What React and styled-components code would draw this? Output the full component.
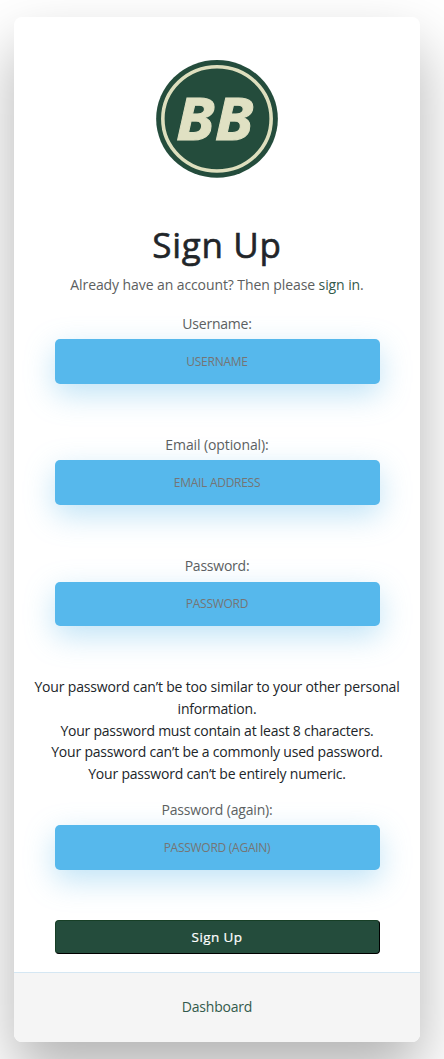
import React from "react";
import styled, { createGlobalStyle } from "styled-components";

const GlobalStyle = createGlobalStyle`
  * { box-sizing: border-box; }
  html, body { margin: 0; background: #fff; }
  body {
    height: 1059px;
    overflow: hidden;
    font-family: "Open Sans", "Noto Sans", sans-serif;
    font-size: 14px;
    line-height: 21.75px;
    color: #212529;
  }
`;

const Page = styled.main`
  padding: 17px 24px 0 14px;
`;

const Card = styled.section`
  display: flex;
  flex-direction: column;
  width: 406px;
  height: 1025px;
  border-radius: 8px;
  background: #fff;
  box-shadow: 0 30px 60px 0 rgba(0, 0, 0, 0.3);
  text-align: center;
  overflow: hidden;
`;

const Logo = styled.svg`
  display: block;
  width: 122px;
  height: 118px;
  margin: 43px auto 0 142px;
`;

const Title = styled.h1`
  margin: 45px 0 0;
  height: 44px;
  font-size: 35px;
  line-height: 44px;
  font-weight: 500;
  letter-spacing: 0.7px;
  -webkit-text-stroke: 0.6px currentColor;
`;

const Intro = styled.p`
  margin: 7px 0 0;
  height: 22px;
  color: #5c5e60;
  letter-spacing: -0.09px;
`;

const Link = styled.a`
  color: #335a4b;
  text-decoration: none;
`;

const Form = styled.form`
  display: flex;
  flex-direction: column;
  margin-top: 17px;
`;

const Field = styled.div`
  display: flex;
  flex-direction: column;
  align-items: center;
  justify-content: space-between;
  height: 71px;
  margin-bottom: ${(p) => p.$after}px;
`;

const Label = styled.label`
  height: 22px;
  color: #5c5e60;
  letter-spacing: ${(p) => p.$spacing}px;
`;

const Input = styled.input`
  width: 325px;
  height: ${(p) => p.$height}px;
  padding: 0;
  border: 0;
  border-radius: 5px;
  background: #56b8ec;
  box-shadow: 0 10px 30px 0 rgba(95, 186, 233, 0.4);
  font-family: inherit;
  font-size: 12px;
  text-align: center;
  text-transform: uppercase;
  letter-spacing: -0.27px;
  &::placeholder { color: #757575; opacity: 1; }
`;

const Rules = styled.ul`
  list-style: none;
  height: 109px;
  margin: 0 0 14px;
  padding: 0 16px;
`;

const Rule = styled.li`
  letter-spacing: ${(p) => p.$spacing}px;
`;

const Submit = styled.button`
  align-self: center;
  width: 325px;
  height: 34px;
  padding: 0;
  border: 1px solid;
  border-color: #173f26 #000 #000 #173f26;
  border-radius: 4px;
  background: #244c3c;
  color: #fff;
  font-family: inherit;
  font-size: 13.5px;
  letter-spacing: 0.4px;
  -webkit-text-stroke: 0.2px currentColor;
`;

const Footer = styled.footer`
  display: flex;
  align-items: center;
  justify-content: center;
  height: 70px;
  margin-top: 18px;
  padding-bottom: 2px;
  border-top: 1px solid #d5e7f3;
  background: #f5f5f5;
  letter-spacing: -0.2px;
`;

function TextField({ label, placeholder, type = "text", after = 50, labelSpacing = -0.23, height = 45 }) {
  const id = placeholder.toLowerCase().replace(/\W+/g, "-");
  return (
    <Field $after={after}>
      <Label htmlFor={id} $spacing={labelSpacing}>{label}</Label>
      <Input id={id} type={type} placeholder={placeholder} $height={height} />
    </Field>
  );
}

export default function App() {
  return (
    <>
      <GlobalStyle />
      <Page>
        <Card>
          <Logo viewBox="0 0 122 118" role="img" aria-label="BB">
            <ellipse cx="61" cy="59" rx="61" ry="59" fill="#244c3c" />
            <ellipse cx="61" cy="59" rx="54.3" ry="52.3" fill="none" stroke="#dedfbe" strokeWidth="3.6" />
            <text
              x="20"
              y="79.7"
              fill="#e0e1c3"
              stroke="#e0e1c3"
              strokeWidth="1"
              fontFamily="Open Sans, sans-serif"
              fontSize="60"
              fontWeight="700"
              fontStyle="italic"
              textLength="77.5"
              lengthAdjust="spacingAndGlyphs"
            >BB</text>
          </Logo>
          <Title>Sign Up</Title>
          <Intro>
            Already have an account? Then please <Link href="#signin">sign in</Link>.
          </Intro>
          <Form>
            <TextField label="Username:" placeholder="Username" />
            <TextField label="Email (optional):" placeholder="Email address" type="email" labelSpacing={-0.1} />
            <TextField label="Password:" placeholder="Password" type="password" after={50.5} height={44} />
            <Rules>
              <Rule $spacing={-0.17}>Your password can’t be too similar to your other personal information.</Rule>
              <Rule $spacing={-0.24}>Your password must contain at least 8 characters.</Rule>
              <Rule $spacing={-0.2}>Your password can’t be a commonly used password.</Rule>
              <Rule $spacing={-0.2}>Your password can’t be entirely numeric.</Rule>
            </Rules>
            <TextField label="Password (again):" placeholder="Password (again)" type="password" labelSpacing={-0.16} />
            <Submit type="button">Sign Up</Submit>
          </Form>
          <Footer>
            <Link href="#dashboard">Dashboard</Link>
          </Footer>
        </Card>
      </Page>
    </>
  );
}
